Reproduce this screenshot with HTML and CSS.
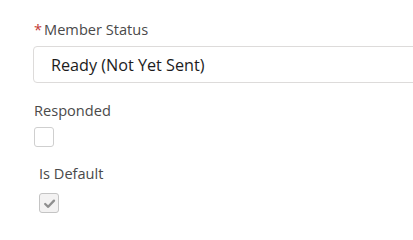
FILE: index.html
```html
<!DOCTYPE html>
<html>
<head>
<meta charset="utf-8">
<link rel="stylesheet" href="styles.css">
</head>
<body>
<div class="form">
  <div class="field">
    <div class="label"><abbr class="req" title="required">*</abbr>Member Status</div>
    <div class="select">Ready (Not Yet Sent)</div>
  </div>
  <div class="field field-check">
    <div class="label">Responded</div>
    <span class="checkbox"></span>
  </div>
  <div class="field field-default">
    <div class="label">Is Default</div>
    <span class="checkbox checked">
      <svg viewBox="0 0 20 20" width="20" height="20"><path d="M6.2 11 L9.2 13.8 L15 7.6" fill="none" stroke="#8f8f8f" stroke-width="2.3" stroke-linecap="round" stroke-linejoin="round"/></svg>
    </span>
  </div>
</div>
</body>
</html>
```
FILE: styles.css
```css
html, body {
  margin: 0;
  padding: 0;
  background: #ffffff;
}
.form {
  overflow: hidden;
  padding: 18px 0 0 34px;
  font-family: "Open Sans", "Liberation Sans", sans-serif;
  color: #444444;
}
.label {
  font-size: 14.6px;
  line-height: 22px;
  color: #4a4a4a;
}
.req {
  color: #c23934;
  text-decoration: none;
  border: 0;
  margin-right: 2px;
}
.select {
  box-sizing: border-box;
  margin: 6px -40px 0 -1px;
  height: 37px;
  padding: 2px 0 0 17px;
  line-height: 33px;
  font-size: 16.2px;
  color: #1c1c1c;
  border: 1px solid #dddbda;
  border-radius: 4px;
}
.field-check {
  margin-top: 16px;
}
.field-check .checkbox {
  margin-top: 6px;
}
.field-default {
  margin-top: 15px;
  padding-left: 5px;
}
.field-default .checkbox {
  margin-top: 9px;
}
.checkbox {
  display: block;
  box-sizing: border-box;
  width: 20px;
  height: 20px;
  border: 1px solid #cfcfcf;
  border-radius: 3px;
  background: #ffffff;
}
.checkbox svg {
  display: block;
  margin: -1px;
}
.checkbox.checked {
  background: #f3f2f2;
  border-color: #c4c4c4;
}
```
